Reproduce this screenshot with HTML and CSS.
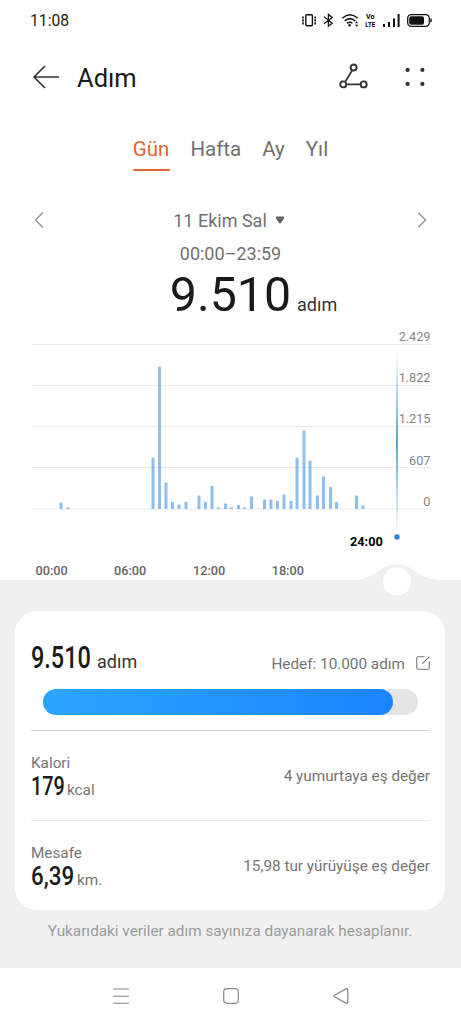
FILE: index.html
```html
<!DOCTYPE html>
<html lang="tr">
	<head>
		<meta charset="utf-8">
		<title>Adım</title>
		<link rel="stylesheet" href="styles.css">
	</head>
	<body>
		<div class="statusbar">
			<span>11:08</span>
			<svg width="134" height="20" viewBox="300 10 134 20">
				<!-- vibrate -->
				<rect x="305.8" y="14.8" width="6.6" height="11" rx="1" fill="none" stroke="#111" stroke-width="1.4"/>
				<path d="M303 16.4v8M315.2 16.4v8" fill="none" stroke="#111" stroke-width="1.6" stroke-dasharray="2.2 .7"/>
				<!-- bluetooth -->
				<path d="M324 16.8l8.2 6.4-3.8 3V14.4l3.8 3-8.2 6.4" fill="none" stroke="#111" stroke-width="1.3"/>
				<!-- wifi -->
				<path d="M342.3 18.2q7.7-6.8 15.4 0M344.8 20.9q5.2-4.6 10.4 0M347.2 23.3q2.7-2.2 5.2 0" fill="none" stroke="#111" stroke-width="1.5"/>
				<circle cx="349.6" cy="25.3" r="1.2" fill="#111"/>
				<path d="M355 23.3l1.6-2 1.6 2zM355 24.8l1.6 2 1.6-2z" fill="#111"/>
				<text class="volte" x="366" y="19.4" textLength="8.5" lengthAdjust="spacingAndGlyphs">Vo</text>
				<text class="volte" x="365.3" y="27.4" textLength="9.8" lengthAdjust="spacingAndGlyphs">LTE</text>
				<!-- signal -->
				<path d="M384 24v3M389 22v5M394 18.5v8.5M398.6 14v13" stroke="#111" stroke-width="2"/>
				<!-- battery -->
				<rect x="407.7" y="14.7" width="21.6" height="11.6" rx="3.6" fill="none" stroke="#111" stroke-width="1.3"/>
				<rect x="409.2" y="16.2" width="14.8" height="8.6" rx="2" fill="#111"/>
				<path d="M431 18.6v3.6" stroke="#111" stroke-width="1.4"/>
			</svg>
		</div>

		<div class="header">
			<svg width="28" height="26" viewBox="0 0 28 26">
				<path d="M13 2L2 13l11 11M2 13h25" fill="none" stroke="#333" stroke-width="1.6"/>
			</svg>
			<h1>Adım</h1>
			<svg class="share" width="30" height="28" viewBox="0 0 30 28">
				<path d="M12.9 7.8L6.4 18.5M7.6 21.4H21" stroke="#333" stroke-width="1.7"/>
				<g fill="none" stroke="#333" stroke-width="1.9">
					<circle cx="14.6" cy="4.5" r="3"/>
					<circle cx="4.2" cy="21.4" r="3"/>
					<circle cx="24.7" cy="21.4" r="3"/>
				</g>
			</svg>
			<svg class="dots" width="22" height="22" viewBox="0 0 22 22" fill="#333">
				<circle cx="3.6" cy="3.9" r="2.1"/>
				<circle cx="18.4" cy="3.9" r="2.1"/>
				<circle cx="3.6" cy="17.9" r="2.1"/>
				<circle cx="18.4" cy="17.9" r="2.1"/>
			</svg>
		</div>

		<div class="tabs">
			<div class="tab active">Gün</div>
			<div class="tab">Hafta</div>
			<div class="tab">Ay</div>
			<div class="tab">Yıl</div>
		</div>

		<div class="date">
			<svg width="12" height="18" viewBox="0 0 12 18"><path d="M10 1.5L2.5 9l7.5 7.5" fill="none" stroke="#999" stroke-width="1.5"/></svg>
			<div class="day">11 Ekim Sal
				<svg width="10" height="8" viewBox="0 0 10 8"><path d="M1.8.5h6.4q1.8.2.8 2L6 6.9q-1 1.2-2 0L1 2.5q-1-1.8.8-2z" fill="#666"/></svg>
			</div>
			<svg width="12" height="18" viewBox="0 0 12 18"><path d="M2 1.5L9.5 9 2 16.5" fill="none" stroke="#999" stroke-width="1.5"/></svg>
		</div>
		<div class="range">00:00–23:59</div>
		<div class="total"><b>9.510</b><span>adım</span></div>

		<svg class="chart" width="461" height="276" viewBox="0 324 461 276">
			<defs>
				<linearGradient id="cursor" x1="0" y1="0" x2="0" y2="1">
					<stop offset="0" stop-color="#4a9ac4" stop-opacity="0"/>
					<stop offset=".5" stop-color="#3388c0"/>
					<stop offset="1" stop-color="#4a9ac4" stop-opacity="0"/>
				</linearGradient>
			</defs>
			<path d="M32 344.5h399M32 385.5h399M32 426.5h399M32 467.5h399M32 509h399" stroke="#e8ebec"/>
			<g class="yaxis">
				<text x="430.5" y="341">2.429</text>
				<text x="430.5" y="382">1.822</text>
				<text x="430.5" y="423">1.215</text>
				<text x="430.5" y="465">607</text>
				<text x="430.5" y="506">0</text>
			</g>
			<!-- half hour bars -->
			<path class="bars" d="M61 509V502.5M68 509V507.5M153 509V457.5M159.5 509V366.5M166 509V482.5M172.5 509V502M179 509V504.5M186 509V502M199 509V495.5M205.5 509V502M212 509V486M218.5 509V507.5M225.5 509V503.5M231.5 509V507.5M238.5 509V505M244.5 509V507.5M251.5 509V496.5M264.5 509V499.5M271 509V499.5M277.5 509V501M284 509V494.5M291 509V501M297 509V457.5M304 509V430.5M310 509V460.5M317.5 509V495.5M323.5 509V476.5M330.5 509V487M336.5 509V502M356.5 509V495.5M363 509V505.5"/>
			<rect x="396.2" y="350" width="1.6" height="184" fill="url(#cursor)"/>
			<circle cx="397" cy="537" r="2.7" fill="#2784e0"/>
			<text class="now" x="350" y="545.5">24:00</text>
			<g class="xaxis">
				<text x="35.5" y="574.5">00:00</text>
				<text x="114" y="574.5">06:00</text>
				<text x="193" y="574.5">12:00</text>
				<text x="271.7" y="574.5">18:00</text>
			</g>
			<path d="M0 580H355C376 579 381 564 397 564S418 579 439 580H461V600H0z" fill="#f0f0f0"/>
			<circle cx="397" cy="581.5" r="14" fill="#fff"/>
		</svg>

		<div class="summary">
			<div class="card">
				<div class="goal">
					<b class="num steps">9.510</b><span class="unit">adım</span>
					<span class="target">Hedef: 10.000 adım</span>
					<svg width="14" height="14" viewBox="0 0 14 14"><path d="M8.5.7H2.5Q.7.7.7 2.5v9q0 1.800 1.800 1.800h9q1.800 0 1.800-1.800V5.500M6.300 7.700L13.300.700" fill="none" stroke="#777" stroke-width="1.1"/></svg>
				</div>
				<div class="progress"><div class="fill" style="width: 93.2%"></div></div>
				<div class="row">
					<div>
						<div class="label">Kalori</div>
						<div class="value"><b class="num kcal">179</b><span>kcal</span></div>
					</div>
					<div class="equal">4 yumurtaya eş değer</div>
				</div>
				<div class="row light">
					<div>
						<div class="label">Mesafe</div>
						<div class="value"><b class="num km">6,39</b><span>km.</span></div>
					</div>
					<div class="equal">15,98 tur yürüyüşe eş değer</div>
				</div>
			</div>
			<p>Yukarıdaki veriler adım sayınıza dayanarak hesaplanır.</p>
		</div>

		<div class="navbar">
			<svg width="16" height="16" viewBox="0 0 16 16"><path d="M0 1h16M0 8.2h16M0 15.2h16" stroke="#888" stroke-width="1.1"/></svg>
			<svg width="16" height="16" viewBox="0 0 16 16"><rect x=".7" y=".7" width="14.6" height="14.6" rx="3.2" fill="none" stroke="#888" stroke-width="1.2"/></svg>
			<svg width="16" height="16" viewBox="0 0 16 16"><path d="M1.5 7.2L12.8.9q2-.8 2 .9v12.4q0 1.700-2 .900L1.500 8.800q-1-.800 0-1.600z" fill="none" stroke="#888" stroke-width="1.2"/></svg>
		</div>
	</body>
</html>
```
FILE: styles.css
```css
*{
	box-sizing: border-box;
}
body{
	margin: 0;
	width: 461px;
	height: 1024px;
	overflow: hidden;
	background: white;
	color: #1a1a1a;
	font-family: Roboto, sans-serif;
}
svg{
	display: block;
	flex: none;
}
.statusbar{
	display: flex;
	justify-content: space-between;
	align-items: center;
	height: 40px;
	padding: 0 27px 0 30px;
	font-size: 15.7px;
}
.volte{
	font-size: 7.5px;
	font-weight: bold;
}
.header{
	display: flex;
	align-items: center;
	height: 74px;
	padding: 0 35px 0 32px;
}
h1{
	flex: 1;
	margin: 1px 0 0 17px;
	font-size: 25.5px;
	font-weight: normal;
}
.dots{
	margin-left: 35px;
}
.tabs{
	display: flex;
	justify-content: center;
	gap: 21px;
	height: 82px;
	padding-top: 20px;
	font-size: 20.5px;
	line-height: 30px;
	color: #707070;
}
.tab{
	height: 37px;
}
.active{
	position: relative;
	color: #e0662f;
}
.active::after{
	content: "";
	position: absolute;
	left: 0;
	right: -1px;
	bottom: 0;
	height: 2.5px;
	border-radius: 1px;
	background: #e0662f;
}
.date{
	display: flex;
	justify-content: space-between;
	align-items: center;
	height: 48px;
	padding: 0 33px;
	font-size: 18px;
	color: #707070;
}
.day{
	display: flex;
	align-items: center;
	gap: 8px;
	padding-right: 3px;
}
.range{
	height: 22px;
	line-height: 20px;
	font-size: 18px;
	text-align: center;
	color: #707070;
}
.total{
	display: flex;
	justify-content: center;
	align-items: baseline;
	gap: 6px;
	height: 58px;
	padding-left: 46px;
	line-height: 58px;
}
.total b{
	font-size: 48.3px;
	font-weight: normal;
}
.total span{
	font-size: 18px;
	color: #333;
}
.yaxis{
	font-size: 12.7px;
	text-anchor: end;
	fill: #858585;
}
.xaxis{
	font-size: 12.7px;
	font-weight: 500;
	fill: #666;
}
.now{
	font-size: 12.7px;
	font-weight: bold;
}
.bars{
	fill: none;
	stroke: #5ea5e6;
	stroke-width: 3;
	stroke-opacity: .7;
}
.summary{
	height: 368px;
	padding: 11px 16px 0 15px;
	background: #f0f0f0;
}
.card{
	height: 299px;
	padding: 27px 15px 0 16px;
	border-radius: 22px;
	background: white;
}
.goal{
	display: flex;
	align-items: baseline;
	height: 51px;
	line-height: 40px;
}
.goal svg{
	position: relative;
	top: 2px;
}
.num{
	display: inline-block;
	font-weight: 500;
	transform-origin: 0 50%;
}
.steps{
	width: 66px;
	font-size: 30.5px;
	transform: scaleX(.77);
}
.unit{
	flex: 1;
	font-size: 18px;
	color: #333;
}
.target{
	position: relative;
	top: 1px;
	margin-right: 11px;
	font-size: 15.3px;
	color: #757575;
}
.progress{
	height: 26px;
	margin: 0 12px 15px;
	border-radius: 13px;
	background: #e5e5e5;
}
.fill{
	height: 26px;
	border-radius: 13px;
	background: linear-gradient(90deg, #2ba6ff, #1a84ff);
}
.row{
	display: flex;
	justify-content: space-between;
	align-items: center;
	height: 90px;
	padding-top: 4px;
	border-top: 1px solid #d4d4d4;
	font-size: 15.3px;
	color: #757575;
}
.light{
	border-color: #e6e6e6;
}
.label{
	height: 20px;
	padding-top: 2px;
	line-height: 20px;
}
.value{
	display: flex;
	align-items: baseline;
	line-height: 30px;
}
.equal{
	padding-bottom: 3px;
}
.value b{
	font-size: 26px;
	color: #1a1a1a;
}
.kcal{
	width: 36px;
	transform: scaleX(.76);
}
.km{
	width: 46px;
	transform: scaleX(.86);
}
.summary p{
	margin: 11px 0 0;
	line-height: 20px;
	font-size: 15.3px;
	text-align: center;
	color: #9b9b9b;
}
.navbar{
	display: flex;
	justify-content: center;
	gap: 94px;
	padding-top: 20px;
}
```
